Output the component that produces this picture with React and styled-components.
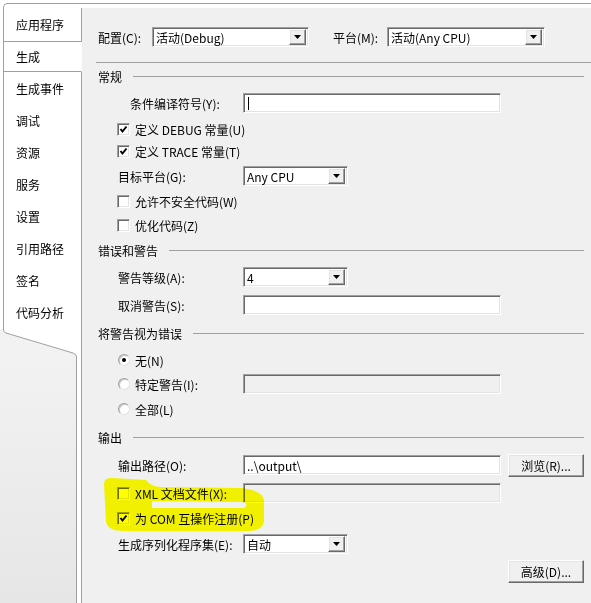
import React from 'react'
import styled, { createGlobalStyle } from 'styled-components'

const GlobalStyle = createGlobalStyle`
  html, body { margin: 0; padding: 0; background: #fff; }
  body {
    font-family: "Noto Sans CJK SC", "Liberation Sans", sans-serif;
    font-size: 12px;
    color: #000;
  }
`

const Frame = styled.div`
  display: flex;
  height: 603px;
  padding: 3px 0 0 3px;
  box-sizing: border-box;
  overflow: hidden;
`
const Nav = styled.div`
  width: 79px;
  flex-shrink: 0;
  display: flex;
  flex-direction: column;
`
const TabList = styled.div`
  border-top: 1px solid #a0a0a0;
  border-left: 1px solid #a0a0a0;
  border-top-left-radius: 5px;
  padding-top: 4px;
  background: #fff;
`
const Tab = styled.div`
  height: ${p => p.$h}px;
  box-sizing: border-box;
  display: flex;
  align-items: center;
  padding-left: 12px;
  border-right: 1px solid ${p => (p.$selected ? 'transparent' : '#a0a0a0')};
  border-bottom: ${p => (p.$line ? '1px solid #a0a0a0' : 'none')};
  white-space: nowrap;
`
const NavTail = styled.div`
  flex: 1;
  display: flex;
  flex-direction: column;
  margin-left: -3px;
  background: #fff;
  border-right: 1px solid #a0a0a0;
`
const Fold = styled.svg`
  display: block;
  width: 81px;
  height: 30px;
`
const Flap = styled.div`
  flex: 1;
  width: 76px;
  border-right: 1px solid #a0a0a0;
  background: linear-gradient(#f2f2f2, #e6e6e6);
`

const Content = styled.div`
  flex: 1;
  position: relative;
  border-top: 1px solid #a0a0a0;
  background: linear-gradient(#fff 4px, #f0f0f0 4px);
  padding-left: 16px;
`
const ConfigBar = styled.div`
  display: flex;
  align-items: center;
  height: 20px;
  margin-left: -2px;
  padding: 23px 0 15px 2px;
  border-bottom: 1px solid #a0a0a0;
`
const BarLabel = styled.span`
  width: ${p => p.$w}px;
  margin-left: ${p => p.$ml || 0}px;
  white-space: nowrap;
`
const Header = styled.div`
  display: flex;
  align-items: center;
  height: 16px;
  margin-top: ${p => p.$mt}px;
`
const HeaderLine = styled.div`
  flex: 1;
  height: 1px;
  background: #a0a0a0;
  margin: 0 9px 0 11px;
`
const Row = styled.div`
  display: flex;
  align-items: center;
  height: 22px;
  margin-top: ${p => p.$mt}px;
  padding-left: ${p => (p.$check ? 19 : 20)}px;
  padding-right: 9px;
  justify-content: ${p => (p.$end ? 'flex-end' : 'flex-start')};
`
const Label = styled.span`
  width: 125px;
  box-sizing: border-box;
  padding-left: ${p => p.$indent || 0}px;
  white-space: nowrap;
`
const sunken = `
  box-sizing: border-box;
  border: 1px solid;
  border-color: #a0a0a0 #fff #fff #a0a0a0;
  box-shadow: inset 1px 1px #696969, inset -1px -1px #e3e3e3;
`
const raised = `
  box-sizing: border-box;
  border: 1px solid;
  border-color: #fff #696969 #696969 #fff;
  box-shadow: inset -1px -1px #a0a0a0, inset 1px 1px #e3e3e3;
  background: #f0f0f0;
`
const TextBox = styled.div`
  ${sunken}
  width: 258px;
  height: 20px;
  display: flex;
  align-items: center;
  padding-left: 3px;
  background: ${p => (p.$disabled ? '#f0f0f0' : '#fff')};
  white-space: nowrap;
`
const Caret = styled.span`
  width: 1px;
  height: 13px;
  margin-left: 1px;
  background: #000;
`
const ComboBox = styled.div`
  ${sunken}
  width: ${p => p.$w}px;
  height: 20px;
  display: flex;
  align-items: center;
  padding: 0 2px 0 3px;
  background: #fff;
  white-space: nowrap;
`
const ComboValue = styled.span`
  flex: 1;
`
const DropBtn = styled.span`
  ${raised}
  width: 17px;
  height: 16px;
  display: flex;
  align-items: center;
  justify-content: center;
`
const Button = styled.div`
  ${raised}
  width: 76px;
  height: 23px;
  margin-left: ${p => p.$ml || 0}px;
  display: flex;
  align-items: center;
  justify-content: center;
  white-space: nowrap;
`
const Box = styled.span`
  ${sunken}
  width: 13px;
  height: 13px;
  background: #fff;
  display: flex;
  align-items: center;
  justify-content: center;
  flex-shrink: 0;
`
const RadioDot = styled.span`
  width: 12px;
  height: 12px;
  box-sizing: border-box;
  border-radius: 50%;
  border: 1px solid;
  border-color: #a0a0a0 #e3e3e3 #e3e3e3 #a0a0a0;
  box-shadow: inset 1px 1px #c8c8c8;
  background: #fff;
  display: flex;
  align-items: center;
  justify-content: center;
  margin-left: 1px;
  &::after {
    content: '';
    width: 4px;
    height: 4px;
    border-radius: 50%;
    background: ${p => (p.$on ? '#000' : 'transparent')};
  }
`
const OptText = styled.span`
  margin-left: 5px;
  white-space: nowrap;
`
const OptLabel = styled.span`
  width: 126px;
  display: flex;
  align-items: center;
`
const Highlight = styled.svg`
  position: absolute;
  left: 0;
  top: 0;
  width: 100%;
  height: 100%;
  pointer-events: none;
  mix-blend-mode: multiply;
`

const tabs = [
  { label: '应用程序', h: 34, line: true },
  { label: '生成', h: 30, line: true, selected: true },
  { label: '生成事件', h: 32 },
  { label: '调试', h: 32 },
  { label: '资源', h: 32 },
  { label: '服务', h: 32 },
  { label: '设置', h: 32 },
  { label: '引用路径', h: 32 },
  { label: '签名', h: 32 },
  { label: '代码分析', h: 32 },
]

function Combo({ w, value }) {
  return (
    <ComboBox $w={w}>
      <ComboValue>{value}</ComboValue>
      <DropBtn>
        <svg width="7" height="4" viewBox="0 0 7 4"><path d="M0 0H7L3.5 4Z" fill="#000" /></svg>
      </DropBtn>
    </ComboBox>
  )
}

function Check({ on, label, width }) {
  const content = (
    <>
      <Box>
        {on && (
          <svg width="9" height="9" viewBox="0 0 9 9">
            <polyline points="1.5,4 3.5,6.5 7.5,1.5" fill="none" stroke="#000" strokeWidth="2" />
          </svg>
        )}
      </Box>
      <OptText>{label}</OptText>
    </>
  )
  return width ? <OptLabel>{content}</OptLabel> : content
}

function Radio({ on, label, wide }) {
  const content = (
    <>
      <RadioDot $on={on} />
      <OptText>{label}</OptText>
    </>
  )
  return wide ? <OptLabel>{content}</OptLabel> : content
}

export default function App() {
  return (
    <>
      <GlobalStyle />
      <Frame>
        <Nav>
          <TabList>
            {tabs.map(t => (
              <Tab key={t.label} $h={t.h} $line={t.line} $selected={t.selected}>{t.label}</Tab>
            ))}
          </TabList>
          <NavTail>
            <Fold viewBox="0 0 81 30">
              <path d="M3 2Q3 4 6 5L73 25Q76 26 76 29V30H0V1H3Z" fill="#f2f2f2" />
              <path d="M3.5 0V2Q3.5 4 6 5L73 25Q76.5 26 76.5 29V30" fill="none" stroke="#a0a0a0" />
            </Fold>
            <Flap />
          </NavTail>
        </Nav>

        <Content>
          <ConfigBar>
            <BarLabel $w={54}>配置(C):</BarLabel>
            <Combo w={157} value="活动(Debug)" />
            <BarLabel $w={54} $ml={24}>平台(M):</BarLabel>
            <Combo w={158} value="活动(Any CPU)" />
          </ConfigBar>

          <Header $mt={5}>常规<HeaderLine /></Header>
          <Row $mt={8}>
            <Label $indent={12}>条件编译符号(Y):</Label>
            <TextBox><Caret /></TextBox>
          </Row>
          <Row $mt={4} $check><Check on label="定义 DEBUG 常量(U)" /></Row>
          <Row $mt={0} $check><Check on label="定义 TRACE 常量(T)" /></Row>
          <Row $mt={3}>
            <Label>目标平台(G):</Label>
            <Combo w={105} value="Any CPU" />
          </Row>
          <Row $mt={3} $check><Check label="允许不安全代码(W)" /></Row>
          <Row $mt={2} $check><Check label="优化代码(Z)" /></Row>

          <Header $mt={6}>错误和警告<HeaderLine /></Header>
          <Row $mt={8}>
            <Label>警告等级(A):</Label>
            <Combo w={105} value="4" />
          </Row>
          <Row $mt={6}>
            <Label>取消警告(S):</Label>
            <TextBox />
          </Row>

          <Header $mt={9}>将警告视为错误<HeaderLine /></Header>
          <Row $mt={8} $check><Radio on label="无(N)" /></Row>
          <Row $mt={2} $check>
            <Radio wide label="特定警告(I):" />
            <TextBox $disabled />
          </Row>
          <Row $mt={3} $check><Radio label="全部(L)" /></Row>

          <Header $mt={9}>输出<HeaderLine /></Header>
          <Row $mt={9}>
            <Label>输出路径(O):</Label>
            <TextBox>..\output\</TextBox>
            <Button $ml={7}>浏览(R)...</Button>
          </Row>
          <Row $mt={6} $check>
            <Check width label="XML 文档文件(X):" />
            <TextBox $disabled />
          </Row>
          <Row $mt={3} $check><Check on label="为 COM 互操作注册(P)" /></Row>
          <Row $mt={4}>
            <Label>生成序列化程序集(E):</Label>
            <Combo w={105} value="自动" />
          </Row>
          <Row $mt={5} $end>
            <Button>高级(D)...</Button>
          </Row>

          <Highlight>
            <g transform="translate(-82 -4)">
              <path
                fillRule="evenodd"
                fill="#ffff00"
                d="M104 484Q104 477 112 478L146 480Q150 486 160 487L240 488Q262 490 264 500L264 522Q262 531 248 531L124 531Q108 531 106 522Z M152 501L244 502Q249 505 244 508L152 508Z"
              />
            </g>
          </Highlight>
        </Content>
      </Frame>
    </>
  )
}
